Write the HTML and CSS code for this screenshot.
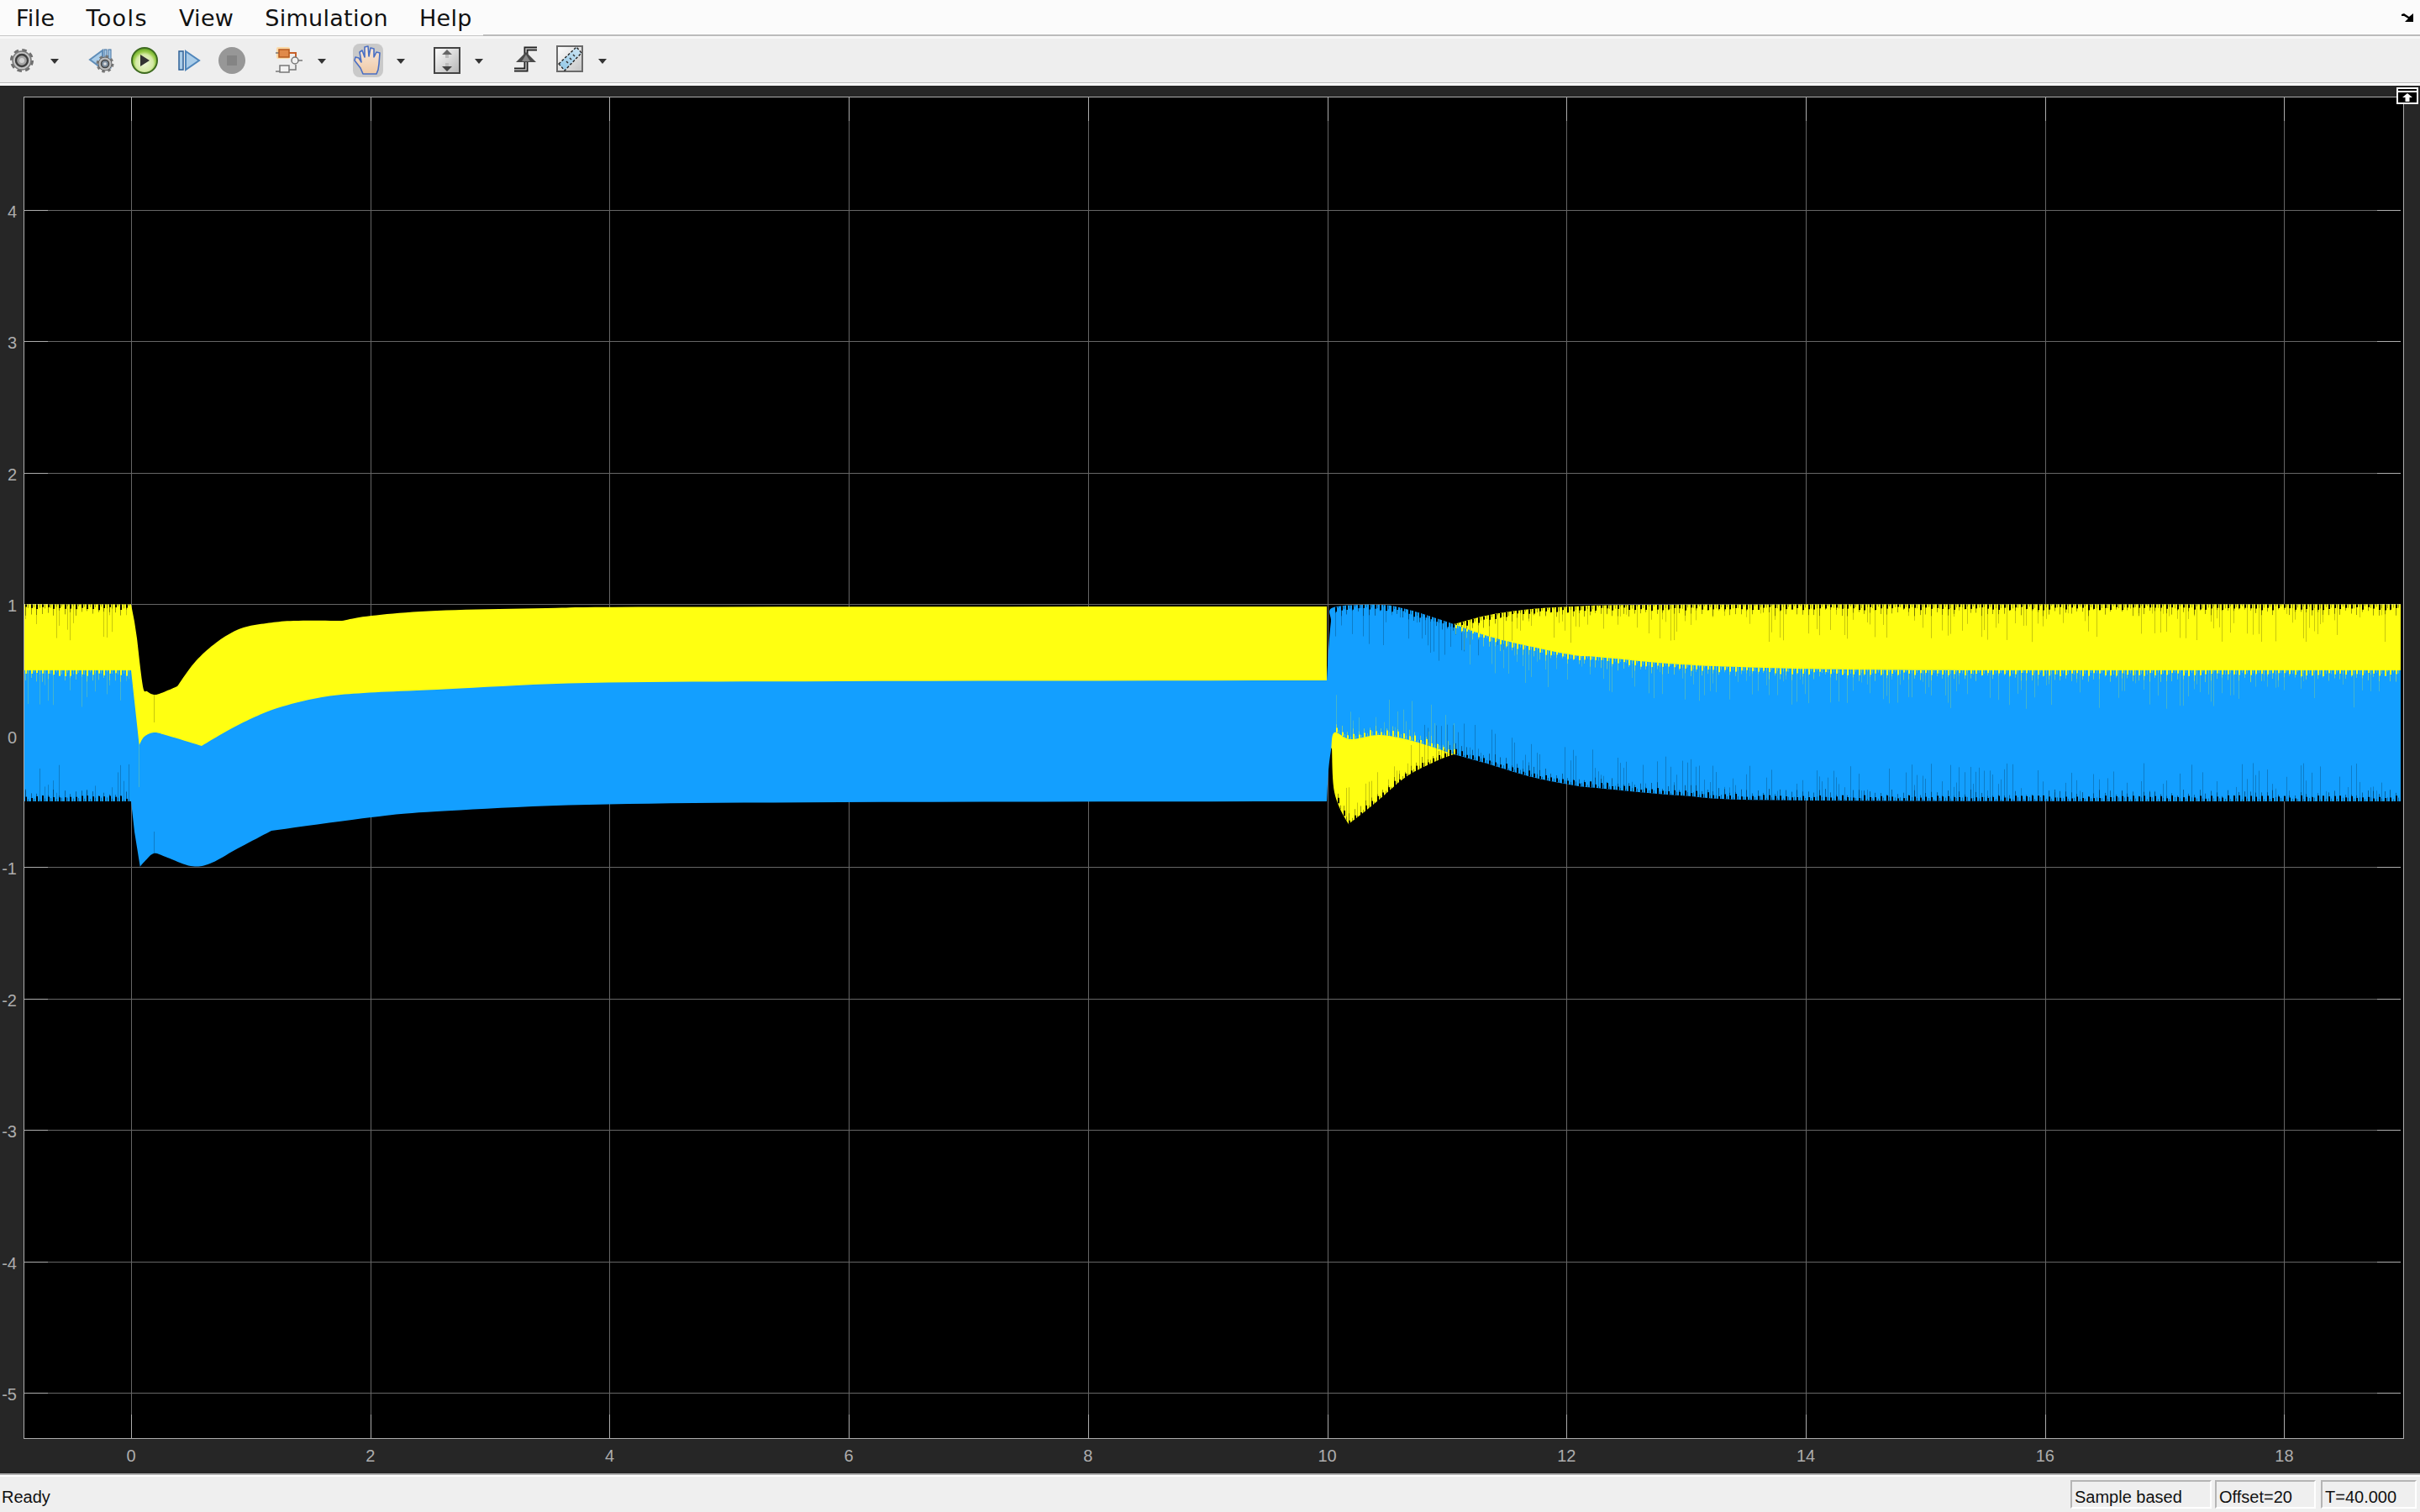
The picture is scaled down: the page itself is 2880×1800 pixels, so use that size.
FILE: index.html
```html
<!DOCTYPE html>
<html lang="en">
<head>
    <meta charset="UTF-8">
    <title>Scope</title>
    <link rel="stylesheet" href="styles.css">
</head>
<body>
    <header class="menubar">
        <nav class="menubar__items">
            <span>File</span>
            <span class="menubar__tools">Tools</span>
            <span>View</span>
            <span>Simulation</span>
            <span>Help</span>
        </nav>
        <div class="menubar__rest">
            <svg class="menubar__undock" width="14" height="10" viewBox="0 0 14 10">
                <path d="M0 1 L3 0 L9 4 L14 0 V10 H4 L8 6 L3 3 H0 Z" fill="#000"/>
            </svg>
        </div>
    </header>

    <div class="toolbar">
        <svg class="tool ml-8" width="36" height="44" viewBox="0 0 36 44">
            <circle cx="18" cy="22" r="12.5" fill="none" stroke="#6e6e6e" stroke-width="3" stroke-dasharray="5.5 4.3"/>
            <circle cx="18" cy="22" r="11" fill="#c4c4c4" stroke="#7a7a7a" stroke-width="1.5"/>
            <circle cx="18" cy="22" r="7" fill="#a5a5a5" stroke="#3f3f3f" stroke-width="2.4"/>
            <circle cx="18" cy="22" r="3" fill="#d2d2d2"/>
        </svg>
        <svg class="arrow ml-16" width="10" height="6" viewBox="0 0 10 6"><path d="M0 0 H10 L5 6 Z" fill="#333"/></svg>

        <svg class="tool ml-35" width="32" height="44" viewBox="0 0 32 44">
            <path d="M2 21 L17 10 V32 Z" fill="#a9cce8" stroke="#5f8db8" stroke-width="2"/>
            <rect x="19" y="9" width="3" height="22" fill="#a9cce8" stroke="#3f6f9f"/>
            <rect x="24" y="9" width="3" height="22" fill="#a9cce8" stroke="#3f6f9f"/>
            <circle cx="20" cy="26" r="9" fill="none" stroke="#777" stroke-width="3" stroke-dasharray="3.5 3.6"/>
            <circle cx="20" cy="26" r="8" fill="#bbb" stroke="#666"/>
            <circle cx="20" cy="26" r="4.5" fill="#7f8fa0" stroke="#444" stroke-width="1.5"/>
            <circle cx="20" cy="26" r="1.8" fill="#ddd"/>
        </svg>
        <svg class="tool ml-17" width="36" height="44" viewBox="0 0 36 44">
            <defs>
                <radialGradient id="playFill" cx="50%" cy="60%" r="55%">
                    <stop offset="0" stop-color="#eef6d8"/>
                    <stop offset="0.62" stop-color="#d4e9a4"/>
                    <stop offset="0.8" stop-color="#9ccd4e"/>
                    <stop offset="1" stop-color="#6fae2c"/>
                </radialGradient>
            </defs>
            <circle cx="18" cy="22" r="15" fill="url(#playFill)" stroke="#3e6a20" stroke-width="2"/>
            <path d="M13 15 L24 22 L13 29 Z" fill="#333"/>
        </svg>
        <svg class="tool ml-19" width="32" height="44" viewBox="0 0 32 44">
            <rect x="4" y="11" width="5" height="22" fill="#a9cce8" stroke="#2f6197" stroke-width="1.5"/>
            <path d="M12 11 L28 22 L12 33 Z" fill="#a9cce8" stroke="#4f86bb" stroke-width="2"/>
        </svg>
        <svg class="tool ml-17" width="36" height="44" viewBox="0 0 36 44">
            <circle cx="18" cy="22" r="16" fill="#979797"/>
            <rect x="12" y="16" width="12" height="12" fill="#848484"/>
        </svg>

        <svg class="tool ml-32" width="36" height="44" viewBox="0 0 36 44">
            <rect x="3" y="6" width="16" height="14" rx="2" fill="#fbd9a6"/>
            <path d="M2 13 H6 M2 35 H7 M18 33 H26 V27 M28 22 H34" fill="none" stroke="#777" stroke-width="1.5"/>
            <path d="M18 13 H26 V18" fill="none" stroke="#c7602a" stroke-width="2"/>
            <rect x="6" y="9" width="12" height="9" fill="#e08a4a" stroke="#b55a20" stroke-width="1.5"/>
            <circle cx="25" cy="22" r="4" fill="#f2f2f2" stroke="#777" stroke-width="1.5"/>
            <rect x="7" y="28" width="11" height="8" fill="#f2f2f2" stroke="#777" stroke-width="1.5"/>
        </svg>
        <svg class="arrow ml-16" width="10" height="6" viewBox="0 0 10 6"><path d="M0 0 H10 L5 6 Z" fill="#333"/></svg>

        <div class="tool-active ml-32">
            <svg width="36" height="40" viewBox="0 0 36 40">
                <defs>
                    <linearGradient id="handFill" x1="0" y1="0" x2="0" y2="1">
                        <stop offset="0" stop-color="#faeade"/>
                        <stop offset="1" stop-color="#eec9a6"/>
                    </linearGradient>
                </defs>
                <path d="M12 36 L9 29 L2 20 L3 16 L7 17 L10 22 L8 10 L11 8 L14 16 L14 4 L18 3 L19 15 L21 5 L25 6 L25 16 L28 10 L32 11 L31 24 L30 31 L28 36 Z" fill="url(#handFill)" stroke="#4a6fc4" stroke-width="1.6" stroke-linejoin="round"/>
            </svg>
        </div>
        <svg class="arrow ml-16" width="10" height="6" viewBox="0 0 10 6"><path d="M0 0 H10 L5 6 Z" fill="#333"/></svg>

        <svg class="tool ml-32" width="36" height="44" viewBox="0 0 36 44">
            <defs>
                <linearGradient id="scaleFill" x1="0" y1="0" x2="1" y2="1">
                    <stop offset="0" stop-color="#fff"/>
                    <stop offset="1" stop-color="#b5b5b5"/>
                </linearGradient>
            </defs>
            <rect x="3" y="7" width="30" height="30" fill="url(#scaleFill)" stroke="#444" stroke-width="2"/>
            <path d="M18 9 L24 15 H20 V19 H16 V15 H12 Z" fill="#666"/>
            <path d="M18 35 L24 29 H20 V25 H16 V29 H12 Z" fill="#444"/>
            <path d="M16 15 H20 V19 H16 Z M16 25 H20 V29 H16 Z" fill="#bbb"/>
        </svg>
        <svg class="arrow ml-15" width="10" height="6" viewBox="0 0 10 6"><path d="M0 0 H10 L5 6 Z" fill="#333"/></svg>

        <svg class="tool ml-34" width="32" height="44" viewBox="0 0 32 44">
            <path d="M3 33 H17 V8 H30" fill="none" stroke="#222" stroke-width="5"/>
            <path d="M3 33 H17 V8 H30" fill="none" stroke="#bbb" stroke-width="1.6"/>
            <path d="M17 12 L29 24 H5 Z" fill="#4a4a4a"/>
            <path d="M17 15 L22 23 H12 Z" fill="#888"/>
        </svg>
        <svg class="tool ml-19" width="36" height="44" viewBox="0 0 36 44">
            <defs>
                <linearGradient id="rulerBox" x1="0" y1="0" x2="1" y2="1">
                    <stop offset="0" stop-color="#fff"/>
                    <stop offset="1" stop-color="#c4c4c4"/>
                </linearGradient>
                <linearGradient id="rulerFill" x1="0" y1="1" x2="1" y2="0">
                    <stop offset="0" stop-color="#8ec6e6"/>
                    <stop offset="1" stop-color="#cfe6f4"/>
                </linearGradient>
            </defs>
            <rect x="3" y="5" width="30" height="30" fill="url(#rulerBox)" stroke="#6a6a6a" stroke-width="2"/>
            <path d="M5 26 L26 6 L32 13 L12 34 Z" fill="url(#rulerFill)" stroke="#222" stroke-width="1.4" stroke-dasharray="3 2"/>
            <path d="M14 23 L16 25 M18 19 L20 21 M22 15 L24 17" stroke="#333" stroke-width="1.5"/>
        </svg>
        <svg class="arrow ml-16" width="10" height="6" viewBox="0 0 10 6"><path d="M0 0 H10 L5 6 Z" fill="#333"/></svg>
    </div>

    <main class="scope">
        <div class="scope__undock">
            <svg width="26" height="20" viewBox="0 0 26 20">
                <rect x="1" y="1" width="24" height="18" fill="#000" stroke="#fff" stroke-width="2"/>
                <path d="M2 5 H24" stroke="#fff" stroke-width="2"/>
                <path d="M13 7 L19 12 H15.5 V17 H10.5 V12 H7 Z" fill="#fff"/>
            </svg>
        </div>
        <div class="scope__ylabels">
            <span>4</span><span>3</span><span>2</span><span>1</span><span>0</span>
            <span>-1</span><span>-2</span><span>-3</span><span>-4</span><span>-5</span>
        </div>
        <div class="scope__plot">
            <canvas id="plot" width="2828" height="1596"></canvas>
        </div>
        <div class="scope__xlabels">
            <span>0</span><span>2</span><span>4</span><span>6</span><span>8</span>
            <span>10</span><span>12</span><span>14</span><span>16</span><span>18</span>
        </div>
    </main>

    <footer class="statusbar">
        <span class="statusbar__ready">Ready</span>
        <span class="statusbar__cell statusbar__cell--mode">Sample based</span>
        <span class="statusbar__cell statusbar__cell--offset">Offset=20</span>
        <span class="statusbar__cell statusbar__cell--time">T=40.000</span>
    </footer>

    <script src="plot.js"></script>
</body>
</html>
```

FILE: styles.css
```css
* {
    box-sizing: border-box;
}
html, body {
    height: 100%;
}
body {
    margin: 0;
    height: 1800px;
    display: flex;
    flex-direction: column;
    overflow: hidden;
    background-color: #fff;
    font-family: "Liberation Sans", Arial, sans-serif;
}

/* menu */
.menubar {
    height: 43px;
    display: flex;
    background-color: #fbfbfb;
}
.menubar__items {
    width: 575px;
    padding-left: 19px;
    display: flex;
    align-items: center;
    gap: 37px;
    border-bottom: 1px solid #c6c6c6;
    font-family: "DejaVu Sans", sans-serif;
    font-size: 27px;
    letter-spacing: 0.3px;
    color: #111;
}
.menubar__tools {
    letter-spacing: 1.4px;
}
.menubar__rest {
    flex: 1;
    padding-right: 8px;
    display: flex;
    justify-content: flex-end;
    align-items: center;
    border-bottom: 2px solid #bbb;
}

/* toolbar */
.toolbar {
    height: 56px;
    margin-bottom: 3px;
    display: flex;
    align-items: center;
    background-color: #eee;
    border-top: 3px solid #f7f7f7;
    border-bottom: 1px solid #bbb;
}
.tool {
    flex: none;
}
.arrow {
    flex: none;
    margin-top: 2px;
}
.tool-active {
    flex: none;
    height: 40px;
    background-color: #c9c9c9;
    border-radius: 8px;
}
.ml-8 { margin-left: 8px; }
.ml-15 { margin-left: 15px; }
.ml-16 { margin-left: 16px; }
.ml-17 { margin-left: 17px; }
.ml-19 { margin-left: 19px; }
.ml-32 { margin-left: 32px; }
.ml-34 { margin-left: 34px; }
.ml-35 { margin-left: 35px; }

/* scope */
.scope {
    position: relative;
    height: 1652px;
    display: grid;
    grid-template-columns: 28px 1fr 22px;
    grid-template-rows: 13px 1598px 41px;
    background-color: #262626;
    color: #adadad;
    font-size: 20px;
}
.scope__undock {
    position: absolute;
    top: 2px;
    right: 2px;
    height: 20px;
}
.scope__undock svg {
    display: block;
}
.scope__plot {
    grid-column: 2;
    grid-row: 2;
    border: 1px solid #adadad;
    background-color: #000;
}
.scope__plot canvas {
    display: block;
}
.scope__ylabels {
    grid-column: 1;
    grid-row: 2;
    padding-top: 59px;
    padding-right: 8px;
    display: grid;
    grid-auto-rows: 156.5px;
    align-content: start;
    text-align: right;
}
.scope__ylabels span {
    align-self: center;
}
.scope__xlabels {
    grid-column: 2;
    grid-row: 3;
    margin-left: -14.36px;
    display: grid;
    grid-template-columns: repeat(10, 284.72px);
    align-items: center;
    text-align: center;
}

/* status */
.statusbar {
    flex: 1;
    padding-top: 6px;
    padding-right: 4px;
    padding-bottom: 4px;
    display: flex;
    align-items: stretch;
    background-color: #efefef;
    border-top: 2px solid #b0b0b0;
    box-shadow: inset 0 2px 0 #fff;
    font-size: 20px;
    color: #111;
}
.statusbar__ready {
    flex: 1;
    padding-left: 2px;
    padding-top: 6px;
    display: flex;
    align-items: center;
}
.statusbar__cell {
    padding-left: 3px;
    padding-top: 6px;
    display: flex;
    align-items: center;
    border: 2px solid #fff;
    border-top-color: #b5b5b5;
    border-left-color: #b5b5b5;
}
.statusbar__cell--mode {
    width: 168px;
}
.statusbar__cell--offset {
    width: 120px;
    margin-left: 4px;
}
.statusbar__cell--time {
    width: 114px;
    margin-left: 6px;
}
```

FILE: plot.js
```js
// scope traces, all points are in window pixels
var canvas = document.getElementById('plot');
var ctx = canvas.getContext('2d');
ctx.translate(-29, -116);

var LEFT = 29, RIGHT = 2857, TOP = 116, BOTTOM = 1712;
var X0 = 156, X_STEP = 284.72, Y0 = 875.8, Y_STEP = 156.5;
var YELLOW = '#ffff11', BLUE = '#139fff';

// catmull-rom through the points, for the parts of a trace without corners
function curve(pts) {
    var out = [];
    for (var i = 0; i < pts.length - 1; i++) {
        var p0 = pts[i - 1] || pts[i], p1 = pts[i], p2 = pts[i + 1], p3 = pts[i + 2] || p2;
        for (var t = 0; t < 1; t += 0.1) {
            var t2 = t * t, t3 = t2 * t;
            out.push([
                0.5 * (2 * p1[0] + (p2[0] - p0[0]) * t + (2 * p0[0] - 5 * p1[0] + 4 * p2[0] - p3[0]) * t2 + (3 * p1[0] - p0[0] - 3 * p2[0] + p3[0]) * t3),
                0.5 * (2 * p1[1] + (p2[1] - p0[1]) * t + (2 * p0[1] - 5 * p1[1] + 4 * p2[1] - p3[1]) * t2 + (3 * p1[1] - p0[1] - 3 * p2[1] + p3[1]) * t3)
            ]);
        }
    }
    out.push(pts[pts.length - 1]);
    return out;
}

var yellowTop = [].concat(
    [[28,719.5],[156,719.5],[160,740],[163,760]],
    curve([[163,760],[170,817],[175,823],[183,827],[192,825],[211,817]]),
    curve([[211,817],[233,787],[260,763],[287,748],[317,742],[350,739],[407,739]]),
    curve([[407,739],[442,733],[520,727],[650,724],[800,722.5],[1579,722]]),
    [[1579,860],[1729,860]],
    curve([[1730,743],[1773,732],[1823,725],[1873,722],[1960,720],[2300,719.5],[2857,719.5]])
);
var yellowBottom = [].concat(
    [[28,900],[1579,900],[1585,890]],
    curve([[1585,890],[1588,943],[1603,978],[1610,977],[1640,953],[1673,925],[1707,907],[1730,898]]),
    [[1735,880],[2857,880]]
);
var blueTop = [].concat(
    [[28,798],[156,798],[165.7,887]],
    curve([[165.7,887],[171.7,877],[183,872],[197,875],[240,888]]),
    curve([[240,888],[267,872],[300,855],[333,842],[383,830],[433,825],[520,821],[700,813],[1000,811],[1579,810]]),
    curve([[1579,810],[1581.5,767],[1584,740],[1587,723],[1643,720],[1673,725],[1700,733],[1730,743]]),
    curve([[1730,743],[1773,758],[1823,770],[1873,780],[1900,782],[2000,791],[2100,795],[2200,797],[2400,798],[2857,798]])
);
var blueBottom = [].concat(
    [[28,954],[156,954],[160,990]],
    curve([[160,990],[166.7,1031.7]]),
    curve([[166.7,1031.7],[171.7,1026],[183,1016],[197,1020],[227,1031],[250,1028],[283,1010],[323,989]]),
    curve([[323,989],[442,973],[520,966],[700,958],[1000,955],[1579,954]]),
    curve([[1579,954],[1581,917],[1584,893],[1588,872],[1607,880],[1640,875],[1673,880],[1707,890],[1730,898]]),
    curve([[1730,898],[1773,910],[1823,925],[1873,935],[1900,938],[2000,947],[2150,953],[2857,954]])
);

var seed = 7;
function rnd() {
    seed = (seed * 16807) % 2147483647;
    return seed / 2147483647;
}

function valueAt(pts, x) {
    for (var i = pts.length - 1; i > 0; i--) {
        if (x >= pts[i - 1][0]) {
            var a = pts[i - 1], b = pts[i];
            if (b[0] === a[0]) return b[1];
            return a[1] + (b[1] - a[1]) * (x - a[0]) / (b[0] - a[0]);
        }
    }
    return pts[0][1];
}

function band(top, bottom, color) {
    ctx.fillStyle = color;
    ctx.beginPath();
    top.forEach(function (p) { ctx.lineTo(p[0], p[1]); });
    bottom.slice().reverse().forEach(function (p) { ctx.lineTo(p[0], p[1]); });
    ctx.closePath();
    ctx.fill();
}

function notch(px, y, dir, len, width, color) {
    ctx.fillStyle = color;
    ctx.fillRect(px, dir > 0 ? y : y - len, width, len);
}

// notches along an edge of a trace; dir 1 goes down from the edge, -1 goes up
function spikes(edge, from, to, dir, solid, mid, faint, longMax) {
    var even = true;
    for (var x = from + 2; x < to; x += 3.33) {
        var px = Math.round(x);
        var y = valueAt(edge, px);
        if (even) {
            notch(px, y, dir, 3 + rnd() * 4, 2, solid);
            notch(px, y, dir, 6 + rnd() * 8, 1, mid);
        } else {
            notch(px, y, dir, 2 + rnd() * 3, 1, mid);
        }
        if (rnd() < 0.4) {
            notch(px, y, dir, 10 + rnd() * longMax, 1, faint);
        }
        even = !even;
    }
}

function drawGrid() {
    var i, p;
    ctx.fillStyle = '#666';
    for (i = 0; i < 10; i++) {
        p = Math.round(X0 + X_STEP * i);
        ctx.fillRect(p, TOP, 1, BOTTOM - TOP);
    }
    for (i = -5; i < 5; i++) {
        p = Math.round(Y0 - Y_STEP * i);
        ctx.fillRect(LEFT, p, RIGHT - LEFT, 1);
    }
    // tick marks are brighter than the grid
    ctx.fillStyle = '#adadad';
    for (i = 0; i < 10; i++) {
        p = Math.round(X0 + X_STEP * i);
        ctx.fillRect(p, TOP, 1, 28);
        ctx.fillRect(p, BOTTOM - 28, 1, 28);
    }
    for (i = -5; i < 5; i++) {
        p = Math.round(Y0 - Y_STEP * i);
        ctx.fillRect(LEFT, p, 28, 1);
        ctx.fillRect(RIGHT - 28, p, 28, 1);
    }
}

var DARK = 'rgba(0,0,0,0.22)';
var DARK_MID = 'rgba(0,0,0,0.4)';
var TINT = 'rgba(255,255,17,0.22)';
var TINT_MID = 'rgba(255,255,17,0.4)';

drawGrid();
band(yellowTop, yellowBottom, YELLOW);
band(blueTop, blueBottom, BLUE);

// before t=0
spikes(yellowTop, 28, 156, 1, '#000', DARK_MID, DARK, 36);
spikes(blueTop, 28, 156, 1, YELLOW, TINT_MID, TINT, 34);
spikes(blueBottom, 28, 156, -1, '#000', DARK_MID, DARK, 36);

// after t=10, the two traces swap around t=11
spikes(blueTop, 1587, 1730, 1, '#000', DARK_MID, DARK, 40);
spikes(yellowBottom, 1590, 1730, -1, '#000', DARK_MID, DARK, 40);
spikes(blueBottom, 1588, 1730, -1, YELLOW, TINT_MID, TINT, 40);
spikes(yellowTop, 1730, 2857, 1, '#000', DARK_MID, DARK, 36);
spikes(blueTop, 1730, 2857, 1, YELLOW, TINT_MID, TINT, 36);
spikes(blueBottom, 1730, 2857, -1, '#000', DARK_MID, DARK, 36);

// stray samples near the start
ctx.fillStyle = DARK;
ctx.fillRect(183, 827, 1, 33);
ctx.fillRect(183, 990, 1, 26);
ctx.fillStyle = TINT;
ctx.fillRect(165, 887, 1, 50);
```
